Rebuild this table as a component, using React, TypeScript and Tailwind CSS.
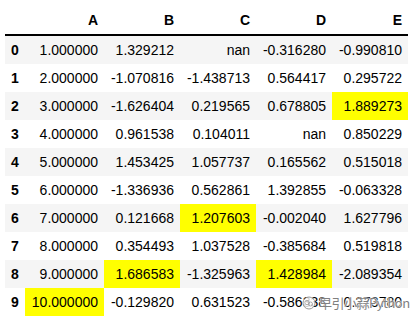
const columns = ["A", "B", "C", "D", "E"];

// each cell: [value, highlighted]
const rows: [string, boolean][][] = [
  [["1.000000", false], ["1.329212", false], ["nan", false], ["-0.316280", false], ["-0.990810", false]],
  [["2.000000", false], ["-1.070816", false], ["-1.438713", false], ["0.564417", false], ["0.295722", false]],
  [["3.000000", false], ["-1.626404", false], ["0.219565", false], ["0.678805", false], ["1.889273", true]],
  [["4.000000", false], ["0.961538", false], ["0.104011", false], ["nan", false], ["0.850229", false]],
  [["5.000000", false], ["1.453425", false], ["1.057737", false], ["0.165562", false], ["0.515018", false]],
  [["6.000000", false], ["-1.336936", false], ["0.562861", false], ["1.392855", false], ["-0.063328", false]],
  [["7.000000", false], ["0.121668", false], ["1.207603", true], ["-0.002040", false], ["1.627796", false]],
  [["8.000000", false], ["0.354493", false], ["1.037528", false], ["-0.385684", false], ["0.519818", false]],
  [["9.000000", false], ["1.686583", true], ["-1.325963", false], ["1.428984", true], ["-2.089354", false]],
  [["10.000000", true], ["-0.129820", false], ["0.631523", false], ["-0.586338", false], ["0.273780", false]],
];

const colWidths = ["w-[79px]", "w-[76px]", "w-[76px]", "w-[76px]", "w-[76px]"];

export default function App() {
  return (
    <div className="relative w-[417px] h-[321px] bg-white text-black text-[14px] font-['Liberation_Sans',Arial,sans-serif] overflow-hidden">
      <div className="ml-[5px] w-[403px]">
        {/* header */}
        <div className="flex h-[36px] pt-[6px] border-b-2 border-black font-bold leading-[28px]">
          <div className="w-[20px]" />
          {columns.map((c, i) => (
            <div key={c} className={`${colWidths[i]} text-right pr-[6px]`}>
              {c}
            </div>
          ))}
        </div>

        {rows.map((row, r) => (
          <div key={r} className={`flex h-[28px] leading-[28px] ${r % 2 === 0 ? "bg-[#f5f5f5]" : "bg-white"}`}>
            <div className="w-[20px] pl-[6px] font-bold">{r}</div>
            {row.map(([v, hi], i) => (
              <div key={i} className={`${colWidths[i]} text-right pr-[6px] ${hi ? "bg-[#ffff00]" : ""}`}>
                {v}
              </div>
            ))}
          </div>
        ))}
      </div>

      {/* watermark */}
      <div className="absolute left-[302px] top-[295px] flex items-center gap-[3px] whitespace-nowrap text-[13px] leading-[16px] text-[#808080] [text-shadow:0_0_1px_#fff,0_0_2px_#fff,0_0_2px_#fff]">
        <svg width="14" height="14" viewBox="0 0 14 14" className="shrink-0">
          <circle cx="7" cy="7" r="6" fill="#ffffff" fillOpacity="0.8" stroke="#999999" strokeWidth="1" />
          <circle cx="5" cy="6.5" r="2.2" fill="none" stroke="#999999" strokeWidth="0.8" />
          <circle cx="8.5" cy="8" r="2" fill="none" stroke="#999999" strokeWidth="0.8" />
        </svg>
        <span className="font-['Noto_Sans_CJK_SC',sans-serif] tracking-[-0.5px]">早引小蒜Python</span>
      </div>
    </div>
  );
}
